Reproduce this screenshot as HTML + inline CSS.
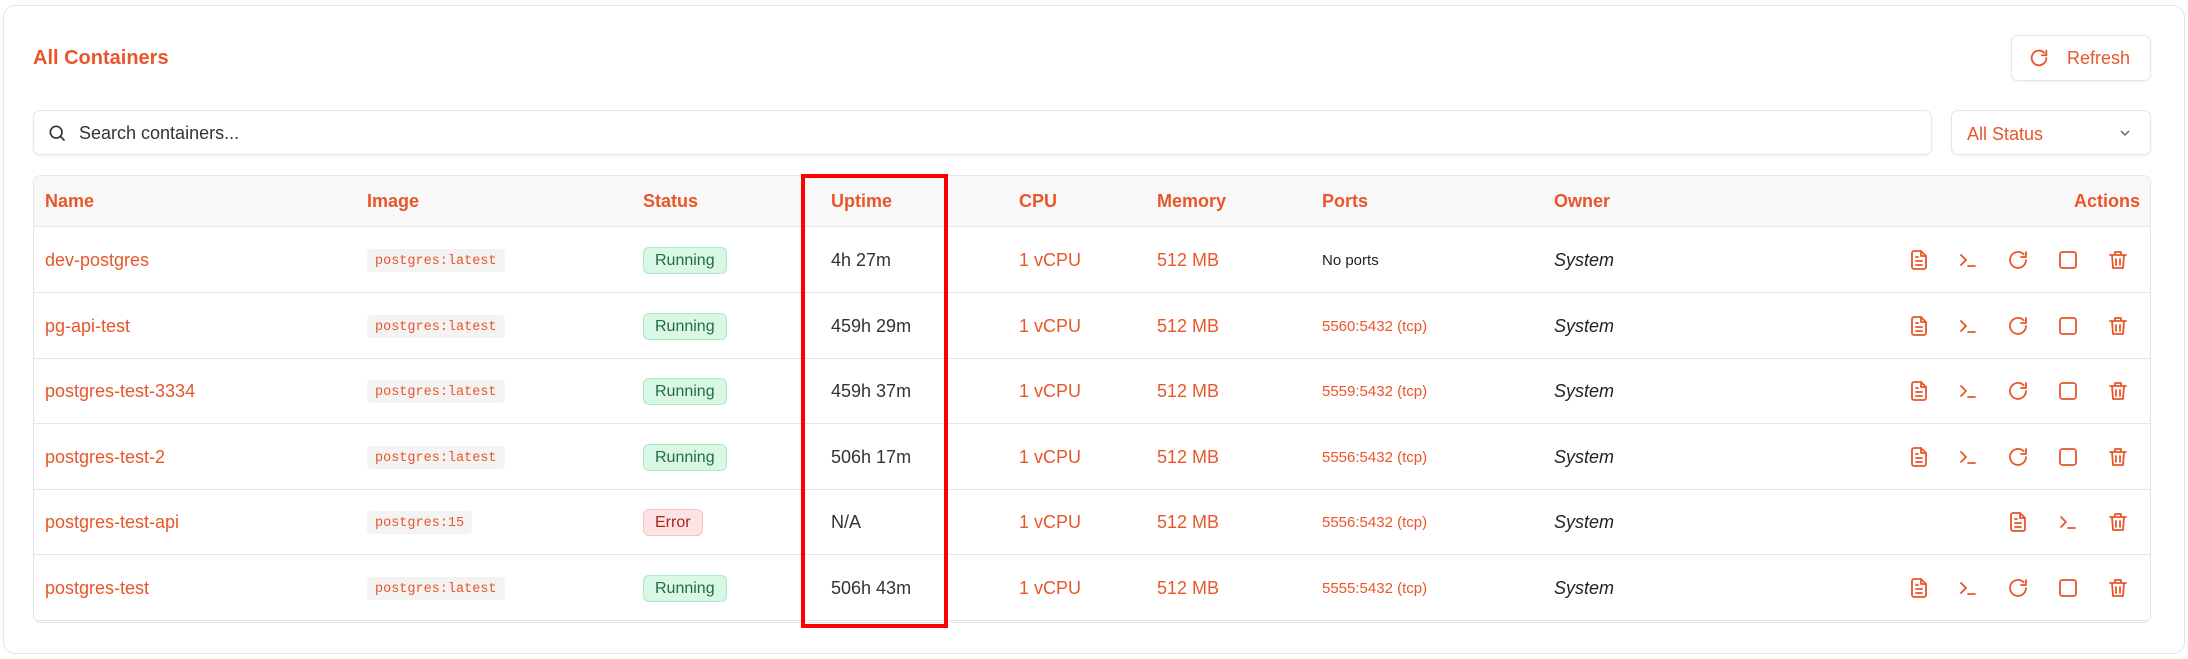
<!DOCTYPE html>
<html><head><meta charset="utf-8"><style>
*{box-sizing:border-box;margin:0;padding:0}
body{width:2188px;height:659px;background:#fff;font-family:"Liberation Sans",sans-serif;position:relative;overflow:hidden;color:#222}
.card{position:absolute;left:3px;top:5px;width:2182px;height:649px;border:1.5px solid #e3e6ea;border-radius:12px}
.abs{position:absolute}
.title{left:33px;top:47px;font-size:20px;color:#e8562a;font-weight:600}
.btn{left:2011px;top:35px;width:140px;height:46px;border:1.5px solid #e3e6ea;border-radius:7px;box-shadow:0 1px 2px rgba(0,0,0,.06);color:#e8562a;font-size:18px}
.search{left:33px;top:110px;width:1899px;height:45px;border:1.5px solid #e3e6ea;border-radius:7px;box-shadow:0 1px 2px rgba(0,0,0,.06)}
.sel{left:1951px;top:110px;width:200px;height:45px;border:1.5px solid #e3e6ea;border-radius:7px;box-shadow:0 1px 2px rgba(0,0,0,.06);color:#e8562a;font-size:18px}
.table{left:33px;top:175px;width:2118px;height:448px;border:1.5px solid #e3e6ea;border-radius:8px;overflow:hidden}
.hdr{position:absolute;left:0;top:0;width:100%;height:51px;background:#f8f8f8;border-bottom:1.5px solid #e3e6ea}
.h{position:absolute;top:15px;font-size:18px;font-weight:bold;color:#e8562a}
.row{position:absolute;left:0;width:100%;height:66px;border-bottom:1.5px solid #e3e6ea}
.c{position:absolute;top:23px;font-size:18px;white-space:nowrap}
.o{color:#e8562a}
.code{position:absolute;top:22px;left:333px;height:23px;padding:5px 8px 0;background:#f3f3f3;border-radius:4px;font-family:"Liberation Mono",monospace;font-size:13.5px;color:#e8562a}
.badge{position:absolute;top:20px;left:609px;height:27px;padding:4px 11px;border-radius:6px;font-size:16px}
.run{background:#d8f7e4;border:1px solid #a9ebc3;color:#216b47}
.err{background:#fde3e3;border:1px solid #f7c3c3;color:#a8231d}
.ic{position:absolute;top:21px;width:24px;height:24px}
.red{left:801px;top:174px;width:147px;height:454px;border:4px solid #f00}
</style></head><body>
<div class="card"></div>
<div class="abs title">All Containers</div>
<div class="abs btn"><svg class="abs" style="left:16px;top:11px" width="22" height="22" viewBox="0 0 24 24" fill="none" stroke="#e8562a" stroke-width="2" stroke-linecap="round"><path d="M20 12a8 8 0 1 1-2.3-5.7"/><path d="M20 4v5h-5"/></svg><span class="abs" style="left:55px;top:12px">Refresh</span></div>
<div class="abs search"><svg class="abs" style="left:13px;top:12px" width="20" height="20" viewBox="0 0 24 24" fill="none" stroke="#333" stroke-width="2"><circle cx="11" cy="11" r="7"/><path d="M16 16l5 5"/></svg><span class="abs" style="left:45px;top:12px;font-size:18px;color:#333">Search containers...</span></div>
<div class="abs sel"><span class="abs" style="left:15px;top:13px">All Status</span><svg class="abs" style="left:166px;top:17px" width="14" height="10" viewBox="0 0 14 10" fill="none" stroke="#666" stroke-width="1.5"><path d="M3 3l4 4 4-4"/></svg></div>
<div class="abs table">
<div class="hdr">
<span class="h" style="left:11px">Name</span><span class="h" style="left:333px">Image</span><span class="h" style="left:609px">Status</span><span class="h" style="left:797px">Uptime</span><span class="h" style="left:985px">CPU</span><span class="h" style="left:1123px">Memory</span><span class="h" style="left:1288px">Ports</span><span class="h" style="left:1520px">Owner</span><span class="h" style="right:10px">Actions</span>
</div>
<div id="rows"></div>
</div>
<div class="abs red"></div>
<script>
var d=[["dev-postgres","postgres:latest",1,"4h 27m","No ports"],["pg-api-test","postgres:latest",1,"459h 29m","5560:5432 (tcp)"],["postgres-test-3334","postgres:latest",1,"459h 37m","5559:5432 (tcp)"],["postgres-test-2","postgres:latest",1,"506h 17m","5556:5432 (tcp)"],["postgres-test-api","postgres:15",0,"N/A","5556:5432 (tcp)"],["postgres-test","postgres:latest",1,"506h 43m","5555:5432 (tcp)"]];
var S='fill="none" stroke="#e8562a" stroke-width="1.8" stroke-linecap="round" stroke-linejoin="round"';
var I={log:'<path d="M14 3H7a2 2 0 0 0-2 2v14a2 2 0 0 0 2 2h10a2 2 0 0 0 2-2V8z"/><path d="M14 3v5h5M9 13h6M9 17h6M9 9h2"/>',term:'<path d="M5 7l5 5-5 5M12 18h7"/>',re:'<path d="M20 12a8 8 0 1 1-2.3-5.7"/><path d="M20 4v5h-5"/>',stop:'<rect x="4" y="4" width="16" height="16" rx="2.5"/>',del:'<path d="M4 7h16M9 7V4h6v3M6 7l1 13h10l1-13M10 11v6M14 11v6"/>'};
function ic(k,x){return '<svg class="ic" style="left:'+x+'px" viewBox="0 0 24 24" '+S+'>'+I[k]+'</svg>'}
var h='';
d.forEach(function(r,i){
h+='<div class="row" style="top:'+(51+i*65.5)+'px">';
h+='<span class="c o" style="left:11px">'+r[0]+'</span><span class="code">'+r[1]+'</span>';
h+='<span class="badge '+(r[2]?'run">Running':'err">Error')+'</span>';
h+='<span class="c" style="left:797px;color:#333">'+r[3]+'</span><span class="c o" style="left:985px">1 vCPU</span><span class="c o" style="left:1123px">512 MB</span>';
h+='<span class="c '+(i?'o':'')+'" style="left:1288px;font-size:15px;top:25px">'+r[4]+'</span>';
h+='<span class="c" style="left:1520px;font-style:italic">System</span>';
if(r[2]){h+=ic('log',1873)+ic('term',1922)+ic('re',1972)+ic('stop',2022)+ic('del',2072);}
else{h+=ic('log',1972)+ic('term',2022)+ic('del',2072);}
h+='</div>';});
document.getElementById('rows').innerHTML=h;
</script>
</body></html>
